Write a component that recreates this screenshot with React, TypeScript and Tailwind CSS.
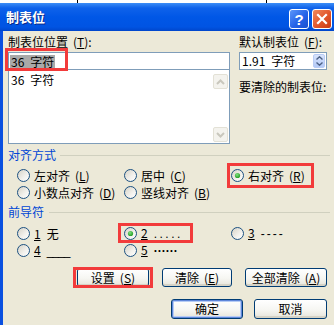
import { ReactNode } from "react";

const font = "font-['Noto_Sans_CJK_SC','Noto_Sans_CJK_JP',sans-serif]";

function Radio({ checked }: { checked?: boolean }) {
  return (
    <svg width="13" height="13" viewBox="0 0 13 13" className="shrink-0">
      <defs>
        <linearGradient id="radioFill" x1="0" y1="0" x2="1" y2="1">
          <stop offset="0" stopColor="#D4D0C4" />
          <stop offset="0.6" stopColor="#F3F2EE" />
          <stop offset="1" stopColor="#FFFFFF" />
        </linearGradient>
        <radialGradient id="radioDot" cx="0.4" cy="0.35" r="0.7">
          <stop offset="0" stopColor="#7FE07F" />
          <stop offset="1" stopColor="#1E9A1E" />
        </radialGradient>
      </defs>
      <circle cx="6.5" cy="6.5" r="6" fill="url(#radioFill)" stroke="#1C5180" />
      {checked && <circle cx="6.5" cy="6.5" r="2.6" fill="url(#radioDot)" />}
    </svg>
  );
}

function Option({ checked, children }: { checked?: boolean; children: ReactNode }) {
  return (
    <div className="flex items-center h-[17px]">
      <Radio checked={checked} />
      <span className="ml-[4px] whitespace-nowrap">{children}</span>
    </div>
  );
}

function Key({ k }: { k: string }) {
  return (
    <span className="ml-[5px]">
      (<u>{k}</u>)
    </span>
  );
}

function Gap({ children }: { children: ReactNode }) {
  return <span className="ml-[6px]">{children}</span>;
}

function Btn({ w, def, children }: { w: string; def?: boolean; children: ReactNode }) {
  return (
    <div
      className={`${w} h-full rounded-[3px] border border-[#003C74] bg-[linear-gradient(to_bottom,#FFFFFF_0%,#F6F6F2_55%,#E6E4DA_100%)] flex items-center justify-center whitespace-nowrap ${
        def ? "shadow-[inset_0_0_0_1px_#5E86DA,inset_0_0_0_2px_#B6CCF5]" : "shadow-[inset_0_-2px_0_#D6D3C6]"
      }`}
    >
      {children}
    </div>
  );
}

function ScrollBtn({ up }: { up?: boolean }) {
  return (
    <div className="h-[15px] w-[15px] rounded-[2px] border border-[#E3E1D6] bg-[#F4F3EE] flex items-center justify-center">
      <svg width="9" height="6" viewBox="0 0 9 6">
        <path
          d={up ? "M1 5 L4.5 1.5 L8 5" : "M1 1 L4.5 4.5 L8 1"}
          fill="none"
          stroke="#C9C7BD"
          strokeWidth="2"
        />
      </svg>
    </div>
  );
}

function RedBox({ className }: { className: string }) {
  return <div className={`absolute border-[3px] border-[#F23B3B] pointer-events-none ${className}`} />;
}

export default function App() {
  return (
    <div className={`relative w-[334px] h-[325px] overflow-hidden bg-white text-[12px] leading-[14px] text-black ${font}`}>
      {/* strip above the window */}
      <div className="flex h-[3px]">
        <div className="w-[77px]" />
        <div className="w-px bg-black" />
        <div className="w-[188px]" />
        <div className="w-px bg-black" />
      </div>

      {/* title bar */}
      <div className="flex h-[28px] bg-[linear-gradient(to_bottom,#3C8DF6_0%,#0F62EA_18%,#0057E6_50%,#0054E3_85%,#0046CC_100%)]">
        <div className="pl-[6px] self-center text-white font-bold text-[13px] leading-[16px] [text-shadow:1px_1px_#0A2A8A]">
          制表位
        </div>
        <div className="ml-auto flex gap-[3px] pt-[6px] pr-[2px]">
          <div className="w-[20px] h-[20px] rounded-[3px] border border-white bg-[linear-gradient(135deg,#5C96FA_0%,#2563E8_55%,#1A4FD0_100%)] flex items-center justify-center text-white font-bold text-[15px] leading-none font-['Liberation_Sans',sans-serif]">
            ?
          </div>
          <div className="w-[20px] h-[20px] rounded-[3px] border border-white bg-[linear-gradient(135deg,#F08A5E_0%,#E1552B_55%,#C83A14_100%)] flex items-center justify-center">
            <svg width="12" height="12" viewBox="0 0 12 12">
              <path d="M2 2 L10 10 M10 2 L2 10" stroke="white" strokeWidth="2.2" strokeLinecap="square" />
            </svg>
          </div>
        </div>
      </div>

      {/* body */}
      <div className="h-[294px] bg-[#ECE9D8] border-l-[3px] border-[#0A50E0] flex flex-col">
        <div className="flex pl-[5px] pt-[4px]">
          {/* left column */}
          <div className="w-[222px] flex flex-col">
            <div className="h-[14px] whitespace-nowrap">
              制表位位置
              <Key k="T" />:
            </div>
            <div className="mt-[3px] h-[18px] border border-[#7F9DB9] bg-white flex items-center pl-[1px]">
              <span className="bg-[#A9A9A9] px-[1px] leading-[13px]">
                36<Gap>字符</Gap>
              </span>
            </div>
            <div className="h-[74px] border border-t-0 border-[#7F9DB9] bg-white flex">
              <div className="flex-1 pl-[2px] pt-[3px]">
                36<Gap>字符</Gap>
              </div>
              <div className="flex flex-col justify-between pt-[4px] pb-[1px] pr-[1px]">
                <ScrollBtn up />
                <ScrollBtn />
              </div>
            </div>
          </div>

          {/* right column */}
          <div className="ml-[9px] w-[88px] flex flex-col">
            <div className="h-[14px] whitespace-nowrap">
              默认制表位
              <Key k="F" />:
            </div>
            <div className="mt-[3px] h-[18px] border border-[#7F9DB9] bg-white flex items-center pl-[2px] pr-[1px]">
              <span className="flex-1">
                1.91<Gap>字符</Gap>
              </span>
              <div className="w-[12px] h-[14px] rounded-[2px] bg-[linear-gradient(to_bottom,#D8E4FC,#B3C9F7)] border border-[#B9CCF5] flex flex-col items-center justify-center gap-[2px]">
                <svg width="7" height="4" viewBox="0 0 7 4">
                  <path d="M0.5 3.5 L3.5 0.8 L6.5 3.5" fill="none" stroke="#4D6185" strokeWidth="1.4" />
                </svg>
                <svg width="7" height="4" viewBox="0 0 7 4">
                  <path d="M0.5 0.5 L3.5 3.2 L6.5 0.5" fill="none" stroke="#4D6185" strokeWidth="1.4" />
                </svg>
              </div>
            </div>
            <div className="mt-[10px] h-[14px] whitespace-nowrap">要清除的制表位:</div>
          </div>
        </div>

        {/* 对齐方式 */}
        <div className="mt-[4px] pl-[5px] pr-[4px] h-[14px] flex items-center gap-[4px]">
          <span className="text-[#0046D5] whitespace-nowrap">对齐方式</span>
          <div className="flex-1 h-px bg-[#D0D0BF]" />
        </div>
        <div className="mt-[5px] pl-[14px] grid grid-cols-[107px_107px_auto]">
          <Option>
            左对齐
            <Key k="L" />
          </Option>
          <Option>
            居中
            <Key k="C" />
          </Option>
          <Option checked>
            右对齐
            <Key k="R" />
          </Option>
          <Option>
            小数点对齐
            <Key k="D" />
          </Option>
          <Option>
            竖线对齐
            <Key k="B" />
          </Option>
        </div>

        {/* 前导符 */}
        <div className="mt-[4px] pl-[5px] pr-[4px] h-[14px] flex items-center gap-[5px]">
          <span className="text-[#0046D5] whitespace-nowrap">前导符</span>
          <div className="flex-1 h-px bg-[#D0D0BF]" />
        </div>
        <div className="mt-[6px] pl-[14px] grid grid-cols-[107px_107px_auto]">
          <Option>
            <u>1</u>
            <Gap>无</Gap>
          </Option>
          <Option checked>
            <u>2</u>
            <Gap>
              <span className="font-['Liberation_Sans',sans-serif] tracking-[2.5px]">.....</span>
            </Gap>
          </Option>
          <Option>
            <u>3</u>
            <Gap>
              <span className="font-['Liberation_Sans',sans-serif] tracking-[2px]">----</span>
            </Gap>
          </Option>
          <Option>
            <u>4</u>
            <Gap>
              <span className="font-['Liberation_Sans',sans-serif] tracking-[-1px]">____</span>
            </Gap>
          </Option>
          <Option>
            <u>5</u>
            <Gap>
              <span className="font-['Liberation_Sans',sans-serif] font-bold">······</span>
            </Gap>
          </Option>
        </div>

        {/* buttons */}
        <div className="mt-[9px] h-[19px] pl-[74px] flex gap-[13px]">
          <Btn w="w-[72px]">
            设置
            <Key k="S" />
          </Btn>
          <Btn w="w-[70px]">
            清除
            <Key k="E" />
          </Btn>
          <Btn w="w-[82px]">
            全部清除
            <Key k="A" />
          </Btn>
        </div>
        <div className="mt-[12px] h-[20px] pr-[7px] flex justify-end gap-[11px]">
          <Btn w="w-[72px]" def>
            确定
          </Btn>
          <Btn w="w-[73px]">取消</Btn>
        </div>
      </div>

      {/* red annotation boxes */}
      <RedBox className="left-[5px] top-[48px] w-[63px] h-[23px]" />
      <RedBox className="left-[227px] top-[163px] w-[87px] h-[25px]" />
      <RedBox className="left-[118px] top-[223px] w-[75px] h-[20px]" />
      <RedBox className="left-[73px] top-[267px] w-[80px] h-[21px]" />
    </div>
  );
}
